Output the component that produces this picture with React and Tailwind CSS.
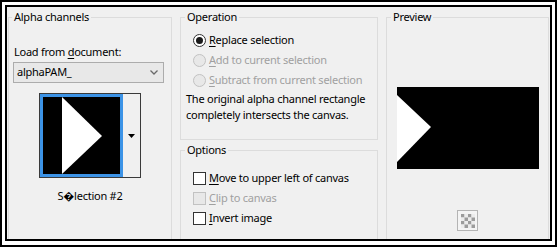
import React from 'react';

const font = { fontFamily: '"Noto Sans", "Open Sans", sans-serif' };

const Radio = ({ checked, disabled, children }) => (
  <div className="flex items-center h-[20px] whitespace-nowrap">
    <span
      className={`w-[13px] h-[13px] shrink-0 rounded-full border flex items-center justify-center ${disabled ? 'border-[#c2c2c2] bg-[#e8e8e8]' : 'border-[#333333] bg-white'}`}
    >
      {checked && <span className="w-[7px] h-[7px] rounded-full bg-[#1a1a1a]" />}
    </span>
    <span className={`ml-[3px] ${disabled ? 'text-[#a0a0a0]' : 'text-black'}`}>{children}</span>
  </div>
);

const Check = ({ disabled, children }) => (
  <div className="flex items-center h-[20px] whitespace-nowrap">
    <span
      className={`w-[13px] h-[13px] shrink-0 border ${disabled ? 'border-[#c2c2c2] bg-[#e8e8e8]' : 'border-[#333333] bg-white'}`}
    />
    <span className={`ml-[3px] ${disabled ? 'text-[#a0a0a0]' : 'text-black'}`}>{children}</span>
  </div>
);

const Group = ({ title, className, children, legendClass = 'ml-[4px]' }) => (
  <fieldset className={`border border-[#dcdcdc] min-w-0 ${className}`}>
    <legend className={`${legendClass} px-[2px] leading-[16px] whitespace-nowrap`}>{title}</legend>
    {children}
  </fieldset>
);

const Checker = () => {
  const cells = [];
  for (let r = 0; r < 4; r++) {
    for (let c = 0; c < 4; c++) {
      cells.push(
        <rect
          key={`${r}-${c}`}
          x={c * 3.5}
          y={r * 3.5}
          width="3.5"
          height="3.5"
          fill={(r + c) % 2 === 0 ? '#9c9c9c' : '#ececec'}
        />
      );
    }
  }
  return (
    <div className="w-[21px] h-[21px] border border-[#b4b4b4] bg-[#f4f4f4] flex items-center justify-center">
      <svg width="14" height="14" viewBox="0 0 14 14">{cells}</svg>
    </div>
  );
};

export default function App() {
  return (
    <div className="w-[557px] h-[247px] bg-white border-2 border-black pt-[3px] px-[3px] pb-[4px] text-[11px] tracking-[-0.25px] text-black" style={font}>
      <div className="h-full border-2 border-black bg-[#f0f0f0] overflow-hidden flex pl-[1px] pt-[2px] gap-[8px]">
        {/* Alpha channels */}
        <Group title="Alpha channels" className="w-[164px] h-[240px] shrink-0" legendClass="ml-[3px]">
          <div className="flex flex-col">
            <div className="ml-[5px] mt-[19px] leading-[16px]">
              Load from <u className="underline-offset-2">d</u>ocument:
            </div>
            <div className="ml-[4px] mt-[2px] w-[151px] h-[21px] border border-[#acacac] bg-[#e8e8e8] flex items-center justify-between pl-[3px] pr-[5px]">
              <span>alphaPAM_</span>
              <svg width="8" height="5" viewBox="0 0 8 5">
                <path d="M0.5 0.5 L4 4 L7.5 0.5" fill="none" stroke="#6a6a6a" strokeWidth="1.3" />
              </svg>
            </div>
            <div className="ml-[30px] mt-[10px] w-[102px] h-[85px] border border-[#3a3a3a] bg-[#f0f0f0] flex">
              <div className="w-[83px] h-[83px] border-[3px] border-[#3c93e6] bg-black">
                <svg width="77" height="77" viewBox="0 0 77 77" className="block">
                  <polygon points="19,0 59,39 19,77" fill="#ffffff" />
                </svg>
              </div>
              <div className="flex-1 flex items-center justify-center">
                <svg width="7" height="4" viewBox="0 0 7 4">
                  <polygon points="0,0 7,0 3.5,4" fill="#000000" />
                </svg>
              </div>
            </div>
            <div className="mt-[10px] ml-[30px] w-[102px] text-center leading-[16px]">S{'\uFFFD'}lection #2</div>
          </div>
        </Group>

        {/* Operation + Options */}
        <div className="w-[198px] shrink-0 flex flex-col">
          <Group title="Operation" className="h-[131px] shrink-0">
            <div className="ml-[12px] mt-[5px] flex flex-col">
              <Radio checked><u className="underline-offset-2">R</u>eplace selection</Radio>
              <Radio disabled><u className="underline-offset-2">A</u>dd to current selection</Radio>
              <Radio disabled><u className="underline-offset-2">S</u>ubtract from current selection</Radio>
            </div>
            <div className="ml-[5px] mt-[1px] leading-[16px] whitespace-nowrap">
              The original alpha channel rectangle
              <br />
              completely intersects the canvas.
            </div>
          </Group>
          <Group title="Options" className="mt-[2px] h-[120px] shrink-0">
            <div className="ml-[12px] mt-[10px] flex flex-col">
              <Check><u className="underline-offset-2">M</u>ove to upper left of canvas</Check>
              <Check disabled><u className="underline-offset-2">C</u>lip to canvas</Check>
              <Check><u className="underline-offset-2">I</u>nvert image</Check>
            </div>
          </Group>
        </div>

        {/* Preview */}
        <Group title="Preview" className="w-[163px] h-[240px] shrink-0">
          <div className="flex flex-col items-center">
            <div className="mt-[62px] w-[142px] h-[82px] bg-black">
              <svg width="142" height="82" viewBox="0 0 142 82" className="block">
                <polygon points="0,8 34,40 0,75" fill="#ffffff" />
              </svg>
            </div>
            <div className="mt-[41px]">
              <Checker />
            </div>
          </div>
        </Group>
      </div>
    </div>
  );
}
